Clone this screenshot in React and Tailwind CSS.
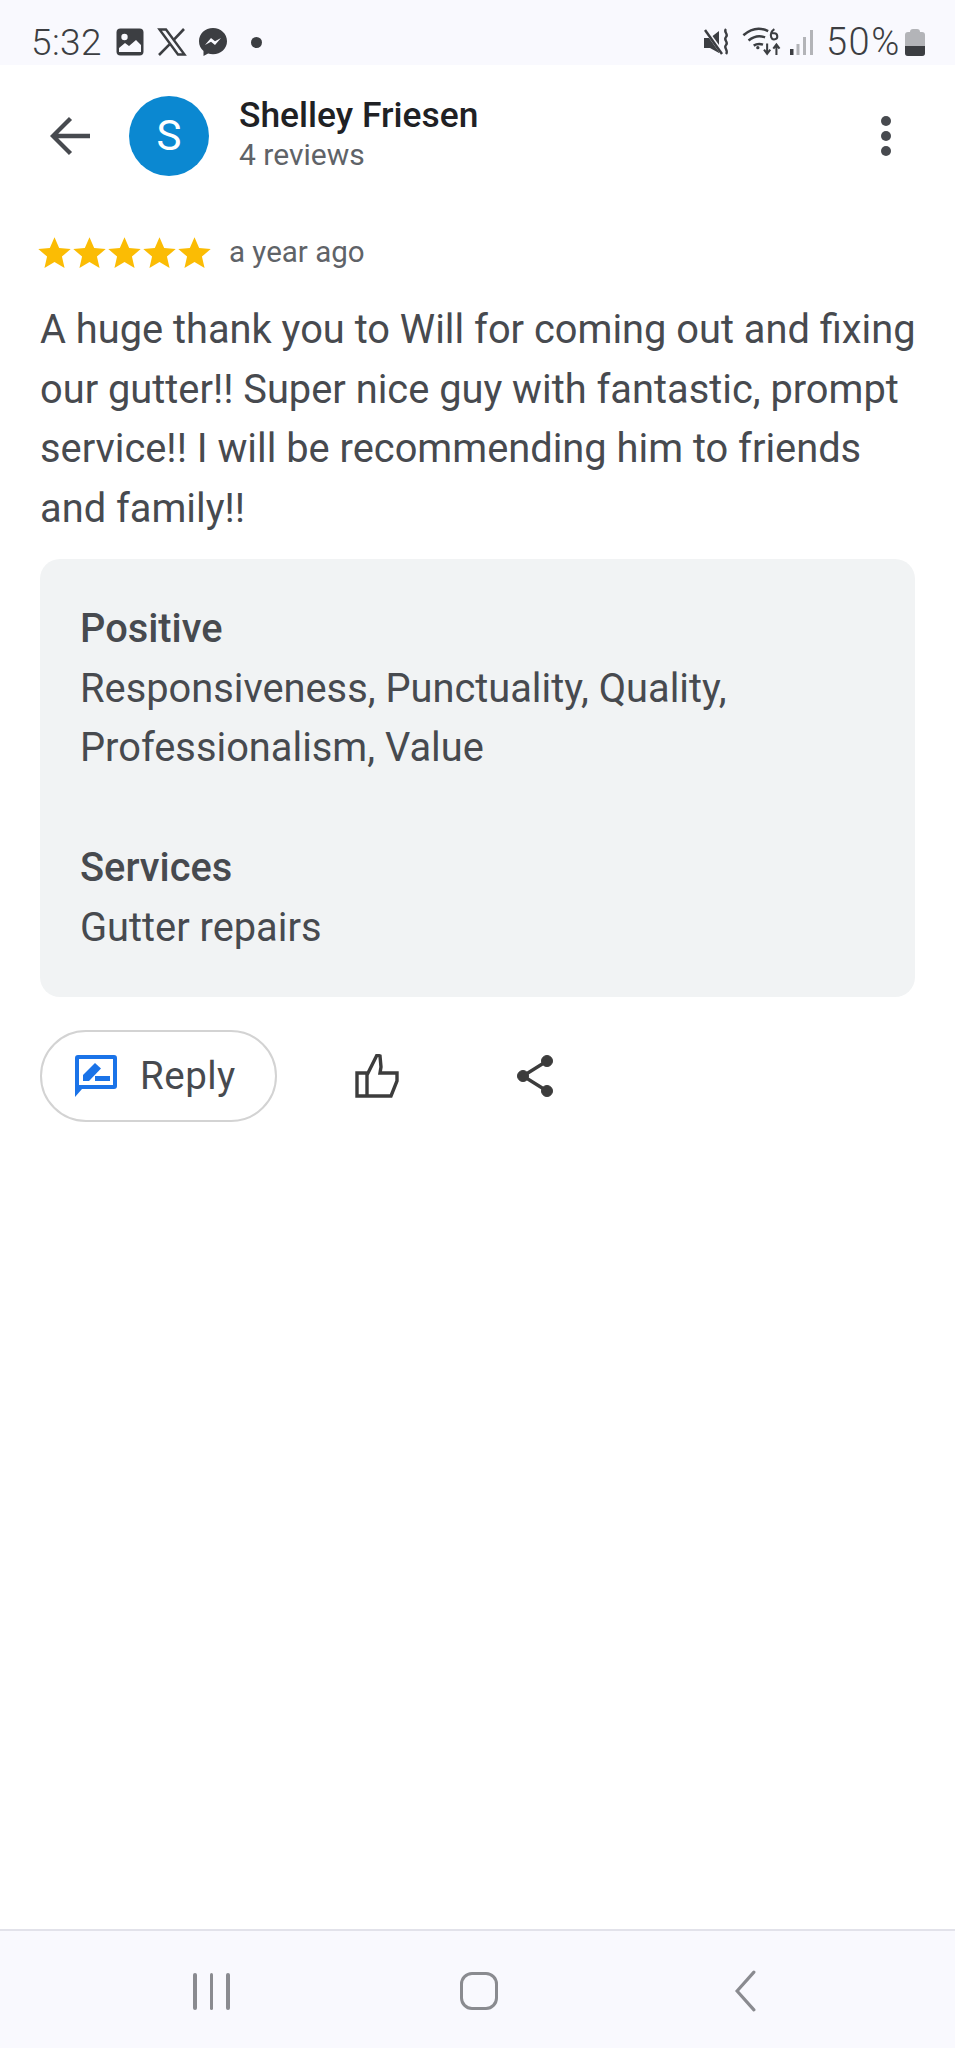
import React from 'react';

const Star = () => (
  <svg viewBox="0 0 24 24" className="w-[35px] h-[35px] shrink-0" fill="#fbbc04">
    <path d="M12 1.6l3.2 7.3 7.9.7-6 5.2 1.8 7.8L12 18.5l-6.9 4.1 1.8-7.8-6-5.2 7.9-.7z" />
  </svg>
);

const StatusBar = () => (
  <div className="h-[65px] bg-[#f9f9fe] flex items-center justify-between pl-[31px] pr-[30px] pt-[19px] text-[#3c3e42]">
    <div className="flex items-center">
      <span className="text-[37px] leading-none font-light tracking-[0.4px] mr-[14px]">5:32</span>
      <svg viewBox="0 0 28 28" className="w-[28px] h-[28px]">
        <rect x="0.5" y="0.5" width="27" height="27" rx="4" fill="#3c3e42" />
        <circle cx="8.5" cy="9" r="3.2" fill="#f9f9fe" />
        <path d="M3 24v-4l6-5 4 3 7-6 5 5v7z" fill="#f9f9fe" />
      </svg>
      <svg viewBox="0 0 30 28" className="w-[30px] h-[28px] ml-[13px]" fill="none" stroke="#3c3e42">
        <path d="M2.5 1.5h6.5l18.5 25H21z" strokeWidth="2.4" />
        <path d="M27 1L16.5 12.2M12.5 16.3L2 27" strokeWidth="2.6" />
      </svg>
      <svg viewBox="0 0 30 30" className="w-[30px] h-[30px] ml-[11px]">
        <path d="M15 1C7 1 1 6.7 1 14.2c0 4 1.7 7.4 4.5 9.8v5l4.6-2.5c1.5.5 3.1.7 4.9.7 8 0 14-5.8 14-13S23 1 15 1z" fill="#3c3e42" />
        <path d="M7 18l6-7 4 3.2 6-3.2-6 7-4-3.2z" fill="#f9f9fe" />
      </svg>
      <span className="w-[11px] h-[11px] rounded-full bg-[#3c3e42] ml-[23px]" />
    </div>
    <div className="flex items-center">
      <svg viewBox="0 0 28 28" className="w-[28px] h-[28px]" fill="none">
        <path d="M0 10h6l9-7v22l-9-5H0z" fill="#3c3e42" />
        <path d="M1 1l18 25" stroke="#f9f9fe" strokeWidth="4" />
        <path d="M1 2l17 24" stroke="#3c3e42" strokeWidth="2.5" />
        <path d="M22 1c-3 3 3 5 0 8s3 5 0 8 3 5 0 9" stroke="#3c3e42" strokeWidth="2.4" />
      </svg>
      <svg viewBox="0 0 40 30" className="w-[42px] h-[31px] ml-[10px]" fill="none" stroke="#3c3e42" strokeWidth="2.4">
        <path d="M1 8c8-7 16-8 24-4M6 13c5-4 11-5 16-3M11 18c3-2 6-2 9-1" />
        <circle cx="15" cy="20" r="1.6" fill="#3c3e42" stroke="none" />
        <path d="M24 25V16M21 22l3 4 3-4M33 27v-9M30 21l3-4 3 4" strokeWidth="2" />
        <path d="M31 2c-3 2-4 5-3 8a3 3 0 1 0 3-4h-3" strokeWidth="2" />
      </svg>
      <svg viewBox="0 0 24 26" className="w-[24px] h-[26px] ml-[6px]" fill="#b3b4b8">
        <rect x="0" y="20" width="3.5" height="6" fill="#3c3e42" />
        <rect x="6.5" y="15" width="3" height="11" />
        <rect x="13" y="8" width="3" height="18" />
        <rect x="20" y="1" width="3" height="25" />
      </svg>
      <span className="text-[38px] leading-none font-light tracking-[1.6px] ml-[12px]">50%</span>
      <div className="ml-[4px] w-[20px] h-[27px] flex flex-col items-center">
        <div className="w-[10px] h-[3px] bg-[#b3b4b8] rounded-t-sm" />
        <div className="w-[20px] h-[24px] rounded-[3px] overflow-hidden bg-[#b3b4b8] flex flex-col justify-end">
          <div className="h-[10px] bg-[#3c3e42]" />
        </div>
      </div>
    </div>
  </div>
);

const App = () => {
  return (
    <div className="w-[955px] h-[2048px] bg-white flex flex-col font-['Roboto',sans-serif] overflow-hidden">
      <StatusBar />

      {/* Header */}
      <div className="h-[134px] flex items-center pl-[50px] pr-[64px] pt-[7px]">
        <svg viewBox="0 0 42 40" className="w-[41px] h-[40px] shrink-0" fill="none" stroke="#474a4f" strokeWidth="4.4">
          <path d="M41 20H4M21 2L3 20l18 18" />
        </svg>
        <div className="ml-[38px] w-[80px] h-[80px] rounded-full bg-[#0b88d1] flex items-center justify-center text-white text-[42px] shrink-0">
          S
        </div>
        <div className="ml-[30px] flex-1 mt-[-3px]">
          <div className="text-[35.4px] leading-[41px] font-medium text-[#202124]">Shelley Friesen</div>
          <div className="text-[30px] leading-[37px] text-[#5f6368]">4 reviews</div>
        </div>
        <div className="flex flex-col gap-[5px]">
          <span className="w-[10px] h-[10px] rounded-full bg-[#474a4f]" />
          <span className="w-[10px] h-[10px] rounded-full bg-[#474a4f]" />
          <span className="w-[10px] h-[10px] rounded-full bg-[#474a4f]" />
        </div>
      </div>

      <div className="px-[40px] flex-1">
        {/* Rating */}
        <div className="flex items-center mt-[33px] h-[40px] ml-[-3px]">
          <Star />
          <Star />
          <Star />
          <Star />
          <Star />
          <span className="ml-[17px] text-[29.5px] text-[#5f6368]">a year ago</span>
        </div>

        <p className="mt-[28px] mr-[-12px] text-[39.8px] leading-[59.7px] text-[#474a4f]">
          A huge thank you to Will for coming out and fixing our gutter!! Super nice guy with fantastic, prompt service!! I will be recommending him to friends and family!!
        </p>

        {/* Attributes */}
        <div className="mt-[20px] h-[438px] rounded-[20px] bg-[#f1f3f4] px-[40px] pt-[40px] text-[39.8px] leading-[59.7px] text-[#474a4f]">
          <div className="font-medium">Positive</div>
          <div>Responsiveness, Punctuality, Quality,</div>
          <div>Professionalism, Value</div>
          <div className="font-medium mt-[60px]">Services</div>
          <div>Gutter repairs</div>
        </div>

        {/* Actions */}
        <div className="mt-[33px] flex items-center">
          <div className="w-[237px] h-[92px] rounded-full border-2 border-[#d3d3d3] flex items-center pl-[33px]">
            <svg viewBox="0 0 42 42" className="w-[42px] h-[42px] shrink-0">
              <path d="M0 3a3 3 0 0 1 3-3h36a3 3 0 0 1 3 3v28a3 3 0 0 1-3 3H7l-7 8z" fill="#1a73e8" />
              <rect x="4" y="4" width="34" height="26" fill="#fff" />
              <path d="M8 26v-6L20 8l6 5.5L14 26z" fill="#1a73e8" />
              <rect x="20" y="21" width="15" height="5" fill="#1a73e8" />
            </svg>
            <span className="ml-[23px] text-[38.5px] tracking-[0.5px] text-[#474a4f]">Reply</span>
          </div>
          <svg viewBox="0 0 44 44" className="w-[44px] h-[44px] ml-[78px]" fill="none" stroke="#3c3c3c" strokeWidth="3.4">
            <path d="M2 19h10v23H2zM12 42h24l6-15v-8H25l1-6-1-11-3-1-10 20" />
          </svg>
          <svg viewBox="0 0 40 44" className="w-[40px] h-[44px] ml-[117px]" fill="#3c3c3c" stroke="#3c3c3c">
            <circle cx="31" cy="7" r="5.5" />
            <circle cx="7" cy="22" r="5.5" />
            <circle cx="31" cy="37" r="5.5" />
            <path d="M31 7L7 22l24 15" fill="none" strokeWidth="3.4" />
          </svg>
        </div>
      </div>

      {/* Nav bar */}
      <div className="h-[119px] bg-[#f9f9fe] border-t-2 border-[#e2e2ea] pt-[3px] flex items-center">
        <div className="ml-[193px] flex gap-[13px]">
          <span className="w-[3.5px] h-[37px] rounded-full bg-[#8a8b90]" />
          <span className="w-[3.5px] h-[37px] rounded-full bg-[#8a8b90]" />
          <span className="w-[3.5px] h-[37px] rounded-full bg-[#8a8b90]" />
        </div>
        <span className="ml-[230px] w-[38px] h-[38px] rounded-[12px] border-[3px] border-[#8a8b90]" />
        <svg viewBox="0 0 22 40" className="ml-[235px] w-[25px] h-[42px]" fill="none" stroke="#8a8b90" strokeWidth="3" strokeLinecap="round">
          <path d="M19 2L3 20l16 18" />
        </svg>
      </div>
    </div>
  );
};

export default App;
